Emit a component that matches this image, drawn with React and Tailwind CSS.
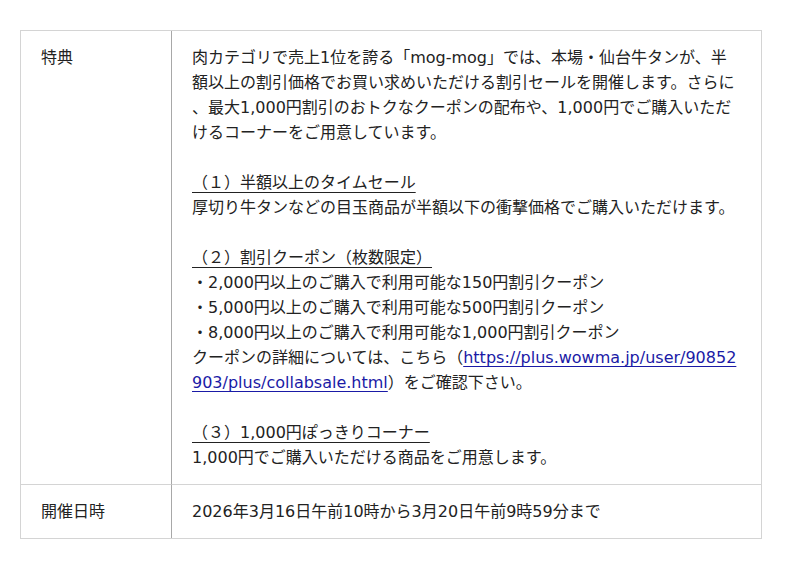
import React from 'react'

const font = "font-['DejaVu_Sans','Noto_Sans_CJK_JP',sans-serif]"

function Line({ children, className = '' }) {
  return <div className={'whitespace-nowrap h-[25px] ' + className}>{children}</div>
}

function Heading({ children }) {
  return (
    <Line>
      <span className="underline underline-offset-[4px] decoration-1">{children}</span>
    </Line>
  )
}

export default function App() {
  return (
    <div className={'bg-white min-h-[569px] pt-[30px] pl-[20px] text-[16px] leading-[25px] text-[#222] ' + font}>
      <div className="w-[742px] border border-[#d4d4d4] grid grid-cols-[151px_1fr]">
        <div className="border-r border-[#a8a8a8] border-b border-b-[#d4d4d4] px-[20px] py-[14px]">特典</div>
        <div className="border-b border-[#d4d4d4] px-[20px] py-[14px]">
          <Line>肉カテゴリで売上1位を誇る「mog-mog」では、本場・仙台牛タンが、半</Line>
          <Line>額以上の割引価格でお買い求めいただける割引セールを開催します。さらに</Line>
          <Line>、最大1,000円割引のおトクなクーポンの配布や、1,000円でご購入いただ</Line>
          <Line>けるコーナーをご用意しています。</Line>
          <Line />
          <Heading>（１）半額以上のタイムセール</Heading>
          <Line>厚切り牛タンなどの目玉商品が半額以下の衝撃価格でご購入いただけます。</Line>
          <Line />
          <Heading>（２）割引クーポン（枚数限定）</Heading>
          <Line>・2,000円以上のご購入で利用可能な150円割引クーポン</Line>
          <Line>・5,000円以上のご購入で利用可能な500円割引クーポン</Line>
          <Line>・8,000円以上のご購入で利用可能な1,000円割引クーポン</Line>
          <Line>
            クーポンの詳細については、こちら（
            <a href="#" className="text-[#1a1aa6] underline underline-offset-[3px] decoration-1">https://plus.wowma.jp/user/90852</a>
          </Line>
          <Line>
            <a href="#" className="text-[#1a1aa6] underline underline-offset-[3px] decoration-1">903/plus/collabsale.html</a>
            ）をご確認下さい。
          </Line>
          <Line />
          <Heading>（３）1,000円ぽっきりコーナー</Heading>
          <Line>1,000円でご購入いただける商品をご用意します。</Line>
        </div>
        <div className="border-r border-[#a8a8a8] px-[20px] py-[14px]">開催日時</div>
        <div className="px-[20px] py-[14px]">
          <Line>2026年3月16日午前10時から3月20日午前9時59分まで</Line>
        </div>
      </div>
    </div>
  )
}
